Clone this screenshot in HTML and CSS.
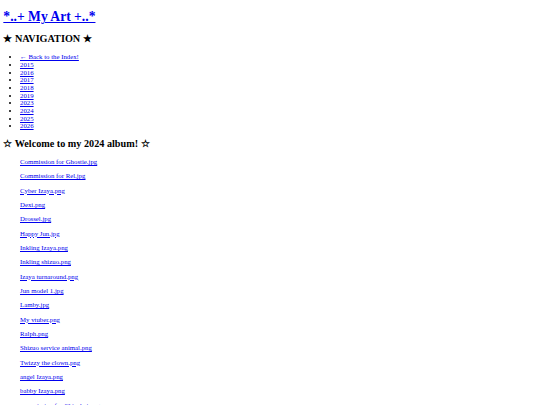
FILE: index.html
```html
<!DOCTYPE html>
<html>
<head>
<meta charset="utf-8">
<title>My Art</title>
<link rel="stylesheet" href="styles.css">
</head>
<body>
<h1 class="title"><a href="#">*..+ My Art +..*</a></h1>
<h2 class="heading">★ NAVIGATION ★</h2>
<ul class="nav">
<li><a href="#">← Back to the Index!</a></li>
<li><a href="#">2015</a></li>
<li><a href="#">2016</a></li>
<li><a href="#">2017</a></li>
<li><a href="#">2018</a></li>
<li><a href="#">2019</a></li>
<li><a href="#">2023</a></li>
<li><a href="#">2024</a></li>
<li><a href="#">2025</a></li>
<li><a href="#">2026</a></li>
</ul>
<h2 class="heading">☆ Welcome to my 2024 album! ☆</h2>
<blockquote class="album">
<p><a href="#">Commission for Ghostie.jpg</a></p>
<p><a href="#">Commission for Rel.jpg</a></p>
<p><a href="#">Cyber Izaya.png</a></p>
<p><a href="#">Dexi.png</a></p>
<p><a href="#">Drossel.jpg</a></p>
<p><a href="#">Happy Jun.jpg</a></p>
<p><a href="#">Inkling Izaya.png</a></p>
<p><a href="#">Inkling shizuo.png</a></p>
<p><a href="#">Izaya turnaround.png</a></p>
<p><a href="#">Jun model 1.jpg</a></p>
<p><a href="#">Lamby.jpg</a></p>
<p><a href="#">My vtuber.png</a></p>
<p><a href="#">Ralph.png</a></p>
<p><a href="#">Shizuo service animal.png</a></p>
<p><a href="#">Twizzy the clown.png</a></p>
<p><a href="#">angel Izaya.png</a></p>
<p><a href="#">babby Izaya.png</a></p>
<p><a href="#">commission for Chiachai.png</a></p>
<p><a href="#">fursona.png</a></p>
</blockquote>
</body>
</html>
```
FILE: styles.css
```css
html {
  background: #fff;
}
body {
  margin: 3.33px;
  font-family: "Liberation Serif", "Times New Roman", serif;
  font-size: 6.8px;
  line-height: 7.67px;
  color: #000;
}
a {
  color: #0000ee;
}
.title {
  font-size: 13.6px;
  line-height: 15.33px;
  margin: 5.9px 0 8.93px;
}
.heading {
  font-size: 10.2px;
  line-height: 11.5px;
  margin: 8.3px 0;
}
.nav {
  margin: 6.67px 0;
  padding-left: 16.67px;
}
.album {
  margin: 6.67px 16.67px;
}
.album p {
  margin: 6.67px 0;
}
```
